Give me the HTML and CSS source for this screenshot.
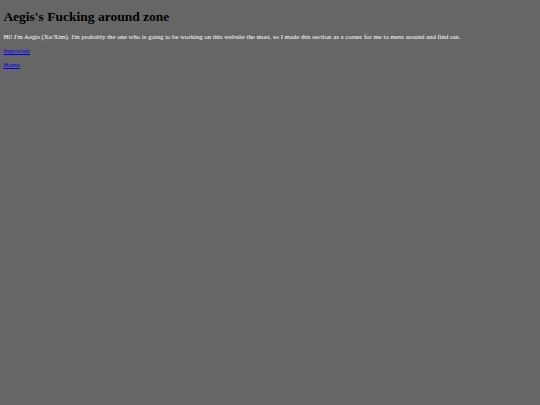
FILE: index.html
```html
<!DOCTYPE html>
<html lang="en">
<head>
<meta charset="utf-8">
<title>Aegis's Fucking around zone</title>
<link rel="stylesheet" href="styles.css">
</head>
<body class="page">
<h1 class="title">Aegis's Fucking around zone</h1>
<p class="intro">Hi! I'm Aegis (Xe/Xim). I'm probably the one who is going to be working on this website the most, so I made this section as a corner for me to mess around and find out.</p>
<p class="nav"><a class="link" href="#">Important</a></p>
<p class="nav"><a class="link" href="#">Home</a></p>
</body>
</html>
```

FILE: styles.css
```css
html {
  background: #666666;
}
.page {
  margin: 0 3.375px 3.375px;
  font-family: "Liberation Serif", "Times New Roman", serif;
  font-size: 6.75px;
  line-height: 7.6px;
  color: #ffffff;
  background: #666666;
}
.title {
  font-size: 13.5px;
  line-height: 15.6px;
  font-weight: bold;
  margin: 8.7px 0 8.4px;
  color: #000000;
}
.intro,
.nav {
  margin: 6.75px 0;
}
.link {
  color: #0000ee;
}
```
